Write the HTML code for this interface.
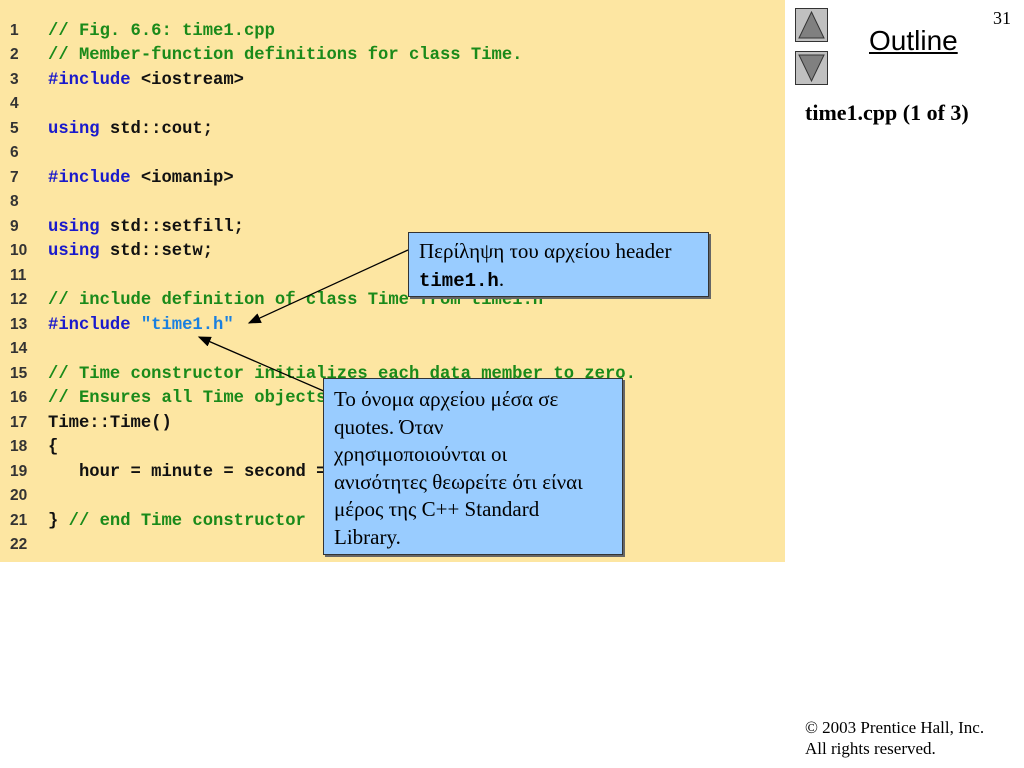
<!DOCTYPE html>
<html><head><meta charset="utf-8"><style>
body{margin:0;width:1024px;height:768px;background:#fff;position:relative;overflow:hidden;font-family:"Liberation Serif",serif}
#code{position:absolute;left:0;top:0;width:785px;height:562px;background:#FDE6A2}
.l{position:absolute;left:0;height:24px;white-space:pre;font:bold 17.2px "Liberation Mono",monospace;color:#111}
.n{position:absolute;left:10px;font:bold 15.5px "Liberation Sans",sans-serif;color:#333}
.c{position:absolute;left:48px}
.g{color:#1A8A1A}.b{color:#1A1ACC}.s{color:#1A80E0}
.box{position:absolute;background:#99CCFF;border:1px solid #333;box-shadow:2px 2px 0 #666;font-size:21px;line-height:27.5px;padding:0 10px;box-sizing:border-box;color:#000;white-space:nowrap}
.btn{position:absolute;left:795px;width:33px;height:34px;background:#C0C0C0;border:1px solid #333;box-sizing:border-box}
</style></head><body>
<div id="code">
<div class="l" style="top:22px"><span class="n">1</span><span class="c g">// Fig. 6.6: time1.cpp</span></div>
<div class="l" style="top:46px"><span class="n">2</span><span class="c g">// Member-function definitions for class Time.</span></div>
<div class="l" style="top:71px"><span class="n">3</span><span class="c"><span class="b">#include</span> &lt;iostream&gt;</span></div>
<div class="l" style="top:95px"><span class="n">4</span></div>
<div class="l" style="top:120px"><span class="n">5</span><span class="c"><span class="b">using</span> std::cout;</span></div>
<div class="l" style="top:144px"><span class="n">6</span></div>
<div class="l" style="top:169px"><span class="n">7</span><span class="c"><span class="b">#include</span> &lt;iomanip&gt;</span></div>
<div class="l" style="top:193px"><span class="n">8</span></div>
<div class="l" style="top:218px"><span class="n">9</span><span class="c"><span class="b">using</span> std::setfill;</span></div>
<div class="l" style="top:242px"><span class="n">10</span><span class="c"><span class="b">using</span> std::setw;</span></div>
<div class="l" style="top:267px"><span class="n">11</span></div>
<div class="l" style="top:291px"><span class="n">12</span><span class="c g">// include definition of class Time from time1.h</span></div>
<div class="l" style="top:316px"><span class="n">13</span><span class="c"><span class="b">#include</span> <span class="s">"time1.h"</span></span></div>
<div class="l" style="top:340px"><span class="n">14</span></div>
<div class="l" style="top:365px"><span class="n">15</span><span class="c g">// Time constructor initializes each data member to zero.</span></div>
<div class="l" style="top:389px"><span class="n">16</span><span class="c g">// Ensures all Time objects start in a consistent state.</span></div>
<div class="l" style="top:414px"><span class="n">17</span><span class="c">Time::Time()</span></div>
<div class="l" style="top:438px"><span class="n">18</span><span class="c">{</span></div>
<div class="l" style="top:463px"><span class="n">19</span><span class="c">   hour = minute = second = 0;</span></div>
<div class="l" style="top:487px"><span class="n">20</span></div>
<div class="l" style="top:512px"><span class="n">21</span><span class="c">} <span class="g">// end Time constructor</span></span></div>
<div class="l" style="top:536px"><span class="n">22</span></div>
</div>
<svg style="position:absolute;left:0;top:0" width="1024" height="768">
<defs><marker id="a" markerWidth="10" markerHeight="8" refX="9" refY="4" orient="auto"><path d="M0,0L10,4L0,8z" fill="#000"/></marker></defs>
<line x1="408" y1="250" x2="249" y2="323" stroke="#000" stroke-width="1.3" marker-end="url(#a)"/>
<line x1="326" y1="392" x2="199" y2="337" stroke="#000" stroke-width="1.3" marker-end="url(#a)"/>
</svg>
<div class="box" style="left:408px;top:232px;width:301px;height:65px;padding-top:5px">Περίληψη του αρχείου header<br><b style="font-family:'Liberation Mono',monospace;font-size:19px">time1.h</b>.</div>
<div class="box" style="left:323px;top:378px;width:300px;height:177px;padding-top:7px">Το όνομα αρχείου μέσα σε<br>quotes. Όταν<br>χρησιμοποιούνται οι<br>ανισότητες θεωρείτε ότι είναι<br>μέρος της C++ Standard<br>Library.</div>
<div class="btn" style="top:8px"><svg width="31" height="32"><path d="M15.5 3L28 29H3z" fill="#808080" stroke="#333"/></svg></div>
<div class="btn" style="top:51px"><svg width="31" height="32"><path d="M3 3H28L15.5 29z" fill="#808080" stroke="#333"/></svg></div>
<div style="position:absolute;left:869px;top:25px;font:28px 'Liberation Sans',sans-serif;text-decoration:underline">Outline</div>
<div style="position:absolute;left:993px;top:8px;font-size:18px">31</div>
<div style="position:absolute;left:805px;top:100px;font-size:22px;font-weight:bold">time1.cpp (1 of 3)</div>
<div style="position:absolute;left:805px;top:717px;font-size:17px;line-height:21px">© 2003 Prentice Hall, Inc.<br>All rights reserved.</div>
</body></html>
